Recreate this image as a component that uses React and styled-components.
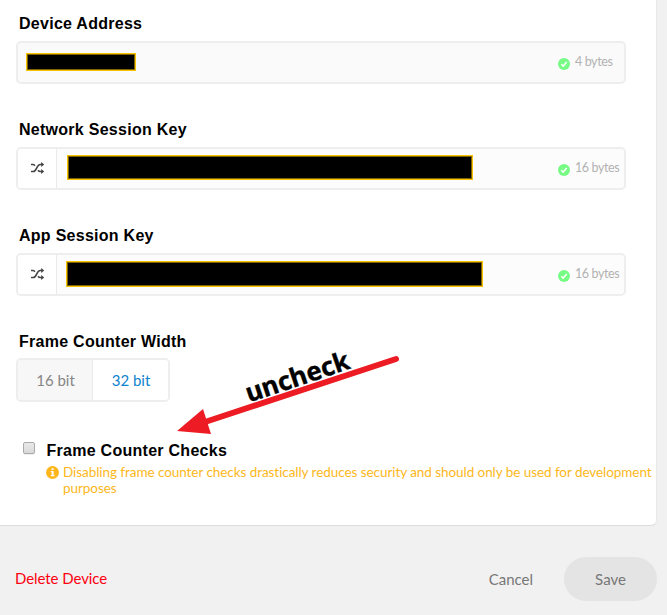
import React from "react";
import styled, { createGlobalStyle } from "styled-components";

const GlobalStyle = createGlobalStyle`
  * { box-sizing: border-box; }
  body { margin: 0; background: #f1f1f1; overflow: hidden; font-family: Lato, sans-serif; font-variant-ligatures: none; }
`;

const Page = styled.main`
  position: relative;
  width: 667px;
  height: 615px;
  display: flex;
  flex-direction: column;
`;

const Card = styled.section`
  width: 657px;
  height: 526px;
  padding: 13px 0 0 16px;
  background: #fff;
  border-right: 1px solid #e9e9e9;
  border-bottom: 1px solid #dcdcdc;
  border-bottom-right-radius: 6px;
`;

const Field = styled.div`
  height: 106px;
`;

const Label = styled.div`
  height: 28px;
  padding-left: 3px;
  font: bold 16px/22px "Liberation Sans", Arial, sans-serif;
  letter-spacing: 0.27px;
  color: #000;
  white-space: nowrap;
`;

const WidthLabel = styled(Label)`
  height: 27px;
`;

const CheckLabel = styled(Label)`
  height: 24px;
  padding-left: 0.5px;
`;

const InputBox = styled.div`
  display: flex;
  width: 610px;
  height: 43px;
  border: 2px solid #eee;
  border-radius: 5px;
  background: ${(p) => (p.$readOnly ? "#fafafa" : "#fcfcfc")};
  overflow: hidden;
`;

const ShuffleButton = styled.div`
  width: 39px;
  flex: none;
  display: flex;
  align-items: center;
  justify-content: center;
  padding-bottom: 1px;
  background: #fff;
  border-right: 1px solid #eaeaea;
`;

const Redaction = styled.div`
  flex: none;
  width: ${(p) => p.$w}px;
  height: ${(p) => p.$h}px;
  margin: ${(p) => p.$top}px 0 0 ${(p) => p.$left}px;
  background: #000;
  border: 1px solid #f8c300;
  box-shadow: inset 0 0 0 1px #806400;
`;

const ByteCount = styled.div`
  display: flex;
  width: 66px;
  margin-left: auto;
  padding-top: 11px;
  font-size: 12.5px;
  letter-spacing: -0.4px;
  line-height: 16px;
  color: #b2b2b2;
  white-space: nowrap;

  svg { flex: none; margin: 4px 5px 0 0; }
`;

const Segments = styled.div`
  display: flex;
  width: 154px;
  height: 44px;
  border: 2px solid #eee;
  border-radius: 5px;
  overflow: hidden;
`;

const Segment = styled.div`
  width: 75px;
  padding-left: 1px;
  font-size: 15px;
  line-height: 40px;
  text-align: center;
  color: ${(p) => (p.$active ? "#0e83cd" : "#868686")};
  background: ${(p) => (p.$active ? "#fff" : "#f7f7f7")};
  border-right: ${(p) => (p.$active ? "0" : "1px solid #eaeaea")};
`;

const CheckRow = styled.div`
  display: flex;
  margin-top: 3px;
`;

const Checkbox = styled.span`
  flex: none;
  width: 12px;
  height: 12px;
  margin: 2px 11px 0 7px;
  border: 1px solid #aaa;
  border-radius: 2px;
  background: linear-gradient(#e9e9e9, #d9d9d9);
  box-shadow: 0 1px 1px #eee;
`;

const Warning = styled.div`
  display: flex;
  color: #fdb71a;
  font-size: 13.5px;
  letter-spacing: -0.06px;
  line-height: 16px;

  svg { flex: none; margin: 2px 4px 0 0; }
`;

const WarningText = styled.div`
  white-space: nowrap;
`;

const Footer = styled.footer`
  display: flex;
  align-items: center;
  height: 44px;
  margin: 31px 10px 0 15px;
  font-size: 15px;
  color: #777;
`;

const DeleteLink = styled.span`
  margin-bottom: 2px;
  letter-spacing: -0.07px;
  color: #fb0010;
`;

const CancelLink = styled.span`
  margin: 0 31px 0 auto;
`;

const SaveButton = styled.div`
  width: 93px;
  height: 44px;
  border-radius: 22px;
  background: #e4e4e4;
  text-align: center;
  line-height: 45px;
`;

const Annotation = styled.svg`
  position: absolute;
  left: 0;
  top: 0;
  pointer-events: none;
`;

const Shuffle = () => (
  <svg width="15" height="12" viewBox="0 0 15 12" fill="none" stroke="#444" strokeWidth="1.6">
    <path d="M1 2.500h2.200c.8 0 1.300.6 1.700 1.200M1 9.500h2.200c3.600 0 3.300-7 7-7H12M8 8.200c.6.8 1.200 1.300 2.200 1.300H12" />
    <path d="M11.200.1 14.200 2.500l-3 2.400zM11.200 7.100l3 2.400-3 2.400z" fill="#444" stroke="none" />
  </svg>
);

const Check = () => (
  <svg width="12" height="12" viewBox="0 0 12 12" fill="none">
    <circle cx="6" cy="6" r="6" fill="#77fb85" />
    <path d="m3.300 6.200 1.900 1.900 3.500-4" stroke="#fff" strokeWidth="1.500" />
  </svg>
);

const Info = () => (
  <svg width="13" height="13" viewBox="0 0 13 13">
    <circle cx="6.500" cy="6.500" r="6.500" fill="#fdb71a" />
    <path d="M5.600 2.200h2v1.800h-2zM4.800 5h2.800v4h.9v1.300H4.800V9h.9V6.300h-.9z" fill="#fff" />
  </svg>
);

const Bytes = ({ count }) => (
  <ByteCount><Check /><span>{count} bytes</span></ByteCount>
);

export default function App() {
  return (
    <Page>
      <GlobalStyle />
      <Card>
        <Field>
          <Label>Device Address</Label>
          <InputBox $readOnly>
            <Redaction $w={110} $h={18} $top={10} $left={8} />
            <Bytes count={4} />
          </InputBox>
        </Field>
        <Field>
          <Label>Network Session Key</Label>
          <InputBox>
            <ShuffleButton><Shuffle /></ShuffleButton>
            <Redaction $w={406} $h={25} $top={6} $left={10} />
            <Bytes count={16} />
          </InputBox>
        </Field>
        <Field>
          <Label>App Session Key</Label>
          <InputBox>
            <ShuffleButton><Shuffle /></ShuffleButton>
            <Redaction $w={417} $h={26} $top={6} $left={9} />
            <Bytes count={16} />
          </InputBox>
        </Field>
        <Field>
          <WidthLabel>Frame Counter Width</WidthLabel>
          <Segments>
            <Segment>16 bit</Segment>
            <Segment $active>32 bit</Segment>
          </Segments>
        </Field>
        <CheckRow>
          <Checkbox />
          <div>
            <CheckLabel>Frame Counter Checks</CheckLabel>
            <Warning>
              <Info />
              <WarningText>
                Disabling frame counter checks drastically reduces security and should only be used for development
                <br />purposes
              </WarningText>
            </Warning>
          </div>
        </CheckRow>
      </Card>
      <Footer>
        <DeleteLink>Delete Device</DeleteLink>
        <CancelLink>Cancel</CancelLink>
        <SaveButton>Save</SaveButton>
      </Footer>
      <Annotation width="667" height="615" viewBox="0 0 667 615">
        <path d="M396 359 205 422" stroke="#ed1c24" strokeWidth="6" strokeLinecap="round" />
        <path d="M177 431 203 409 211 434z" fill="#ed1c24" />
        <text
          transform="translate(249 402.500) rotate(-18.500)"
          fontFamily="Noto Sans, sans-serif"
          fontWeight="700"
          fontSize="26"
          textLength="108"
          lengthAdjust="spacingAndGlyphs"
          stroke="#000"
          strokeWidth="0.4"
        >
          uncheck
        </text>
      </Annotation>
    </Page>
  );
}
